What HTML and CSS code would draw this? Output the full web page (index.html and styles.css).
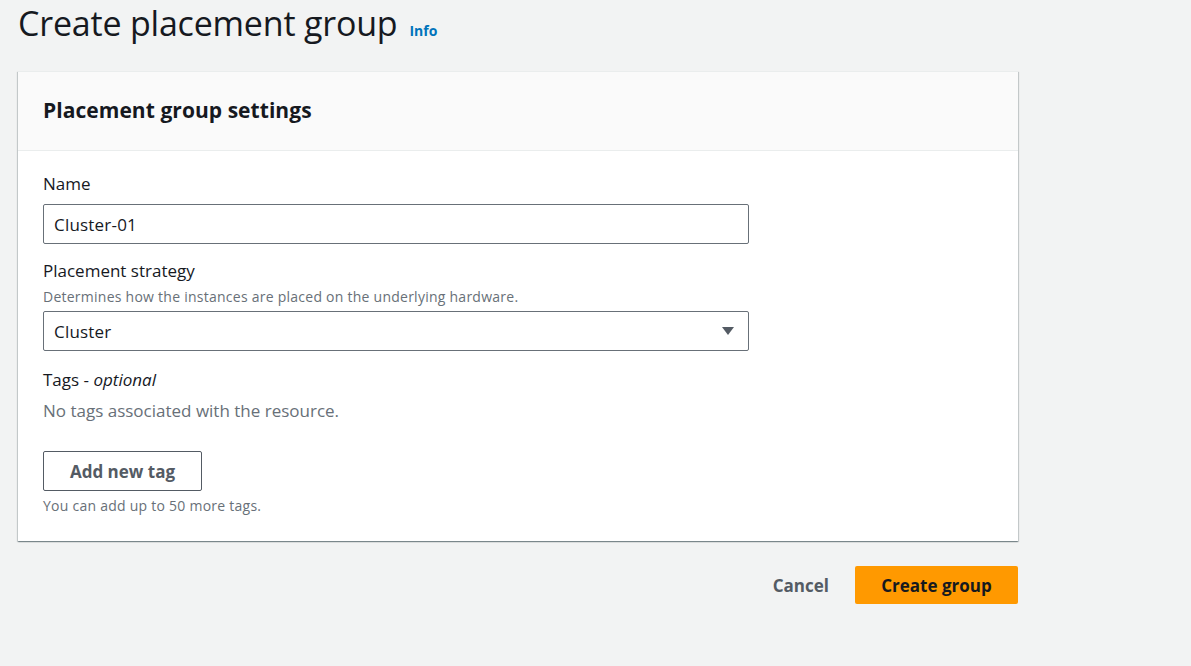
FILE: index.html
```html
<!DOCTYPE html>
<html>
<head>
<meta charset="utf-8">
<link rel="stylesheet" href="styles.css">
</head>
<body>
<div class="page">
  <div class="title-row">
    <h1 class="title">Create placement group</h1>
    <a class="info" href="#">Info</a>
  </div>
  <div class="card">
    <div class="card-header">
      <h2 class="card-title">Placement group settings</h2>
    </div>
    <div class="card-body">
      <div class="field">
        <label class="label">Name</label>
        <div class="input">Cluster-01</div>
      </div>
      <div class="field">
        <label class="label">Placement strategy</label>
        <div class="desc">Determines how the instances are placed on the underlying hardware.</div>
        <div class="input select">
          <span>Cluster</span>
          <svg class="caret" width="14" height="10" viewBox="0 0 14 10"><path d="M1 1 L13 1 L7 9 Z" fill="#545b64"/></svg>
        </div>
      </div>
      <div class="field tags">
        <div class="label">Tags - <i>optional</i></div>
        <div class="empty">No tags associated with the resource.</div>
        <button class="btn-normal">Add new tag</button>
        <div class="hint">You can add up to 50 more tags.</div>
      </div>
    </div>
  </div>
  <div class="actions">
    <button class="btn-link">Cancel</button>
    <button class="btn-primary">Create group</button>
  </div>
</div>
</body>
</html>
```
FILE: styles.css
```css
* { box-sizing: border-box; }
html, body { margin: 0; padding: 0; }
body {
  background: #f2f3f3;
  font-family: "Open Sans", "Noto Sans", sans-serif;
  color: #16191f;
}
.page {
  width: 1000px;
  margin-left: 18px;
}
.title-row {
  display: flex;
  align-items: baseline;
  gap: 12px;
  height: 71px;
}
.title {
  margin: 0;
  font-size: 34px;
  font-weight: 400;
  line-height: 46px;
  letter-spacing: -0.2px;
}
.info {
  color: #0073bb;
  font-size: 14px;
  font-weight: 700;
  text-decoration: none;
}
.card {
  background: #fff;
  box-shadow: 0 1px 1px 0 rgba(0,28,36,0.3), 1px 1px 1px 0 rgba(0,28,36,0.15), -1px 1px 1px 0 rgba(0,28,36,0.15);
  border-top: 1px solid #eaeded;
}
.card-header {
  background: #fafafa;
  border-bottom: 1px solid #eaeded;
  height: 79px;
  display: flex;
  align-items: center;
  padding: 0 25px 2px;
}
.card-title {
  margin: 0;
  font-size: 21px;
  font-weight: 700;
  line-height: 26px;
  letter-spacing: 0.05px;
}
.card-body {
  padding: 22px 25px 26px;
}
.field { margin-bottom: 16px; }
.label {
  display: block;
  font-size: 17px;
  line-height: 22px;
  margin-bottom: 9px;
}
.label i { font-style: italic; }
.desc {
  font-size: 14px;
  letter-spacing: 0.25px;
  color: #687078;
  line-height: 18px;
  margin-top: -3px;
  margin-bottom: 5px;
}
.input {
  width: 706px;
  height: 40px;
  border: 1px solid #687078;
  border-radius: 2px;
  padding: 0 10px;
  display: flex;
  align-items: center;
  font-size: 17px;
  letter-spacing: 0.2px;
}
.select { justify-content: space-between; padding-right: 13px; }
.tags { margin-top: 18px; margin-bottom: 0; }
.tags .label { margin-bottom: 0; }
.empty {
  font-size: 17px;
  color: #687078;
  line-height: 22px;
  margin-top: 9px;
}
.btn-normal {
  display: block;
  margin-top: 29px;
  height: 40px;
  width: 159px;
  background: #fff;
  border: 1px solid #545b64;
  border-radius: 2px;
  font-family: inherit;
  font-size: 17px;
  font-weight: 700;
  color: #545b64;
}
.hint {
  font-size: 14px;
  letter-spacing: 0.25px;
  color: #687078;
  margin-top: 6px;
  line-height: 18px;
}
.actions {
  display: flex;
  justify-content: flex-end;
  align-items: center;
  gap: 26px;
  margin-top: 25px;
}
.btn-link {
  background: none;
  border: none;
  font-family: inherit;
  font-size: 17px;
  font-weight: 700;
  color: #545b64;
  padding: 0;
}
.btn-primary {
  background: #ff9900;
  border: none;
  border-radius: 2px;
  height: 38px;
  width: 163px;
  font-family: inherit;
  font-size: 17px;
  font-weight: 700;
  color: #16191f;
}
```
